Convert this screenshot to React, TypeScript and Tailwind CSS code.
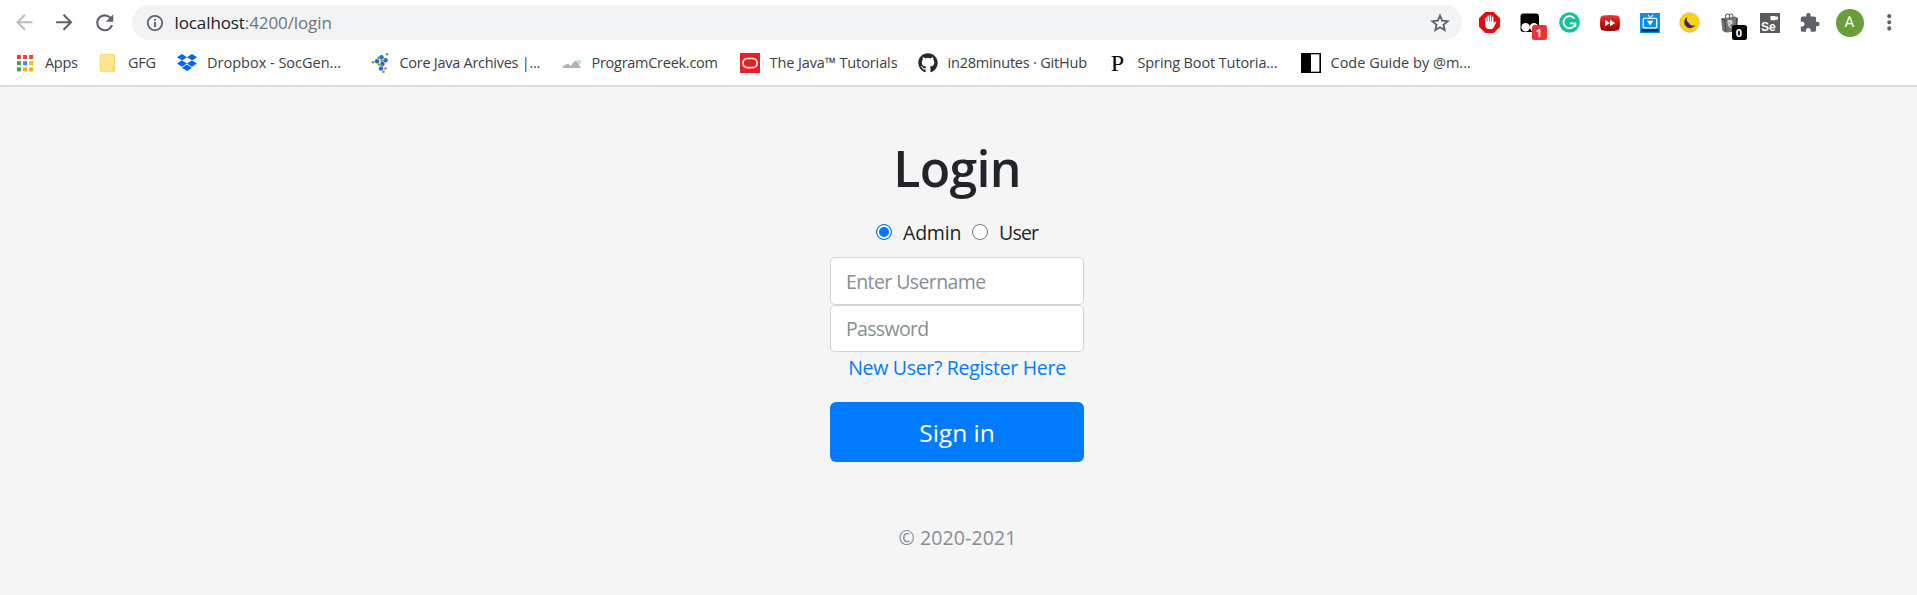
import React from 'react';
import { MdArrowBack, MdArrowForward, MdExtension, MdMoreVert, MdRefresh } from 'react-icons/md';
import { FaDropbox, FaGithub } from 'react-icons/fa';

function InfoIcon() {
  return (
    <svg width="20" height="20" viewBox="0 0 20 20">
      <circle cx="10" cy="10" r="7.200" fill="none" stroke="currentColor" strokeWidth="1.800" />
      <path d="M10 9v5M10 5.900v1.900" stroke="currentColor" strokeWidth="1.900" />
    </svg>
  );
}

function StarIcon() {
  return (
    <svg width="22" height="22" viewBox="0 0 24 24">
      <path
        d="M12 3.900l2.350 5.550 6 .52-4.550 3.950 1.360 5.880L12 16.680 6.840 19.800l1.360-5.880L3.650 9.970l6-.52z"
        fill="none"
        stroke="currentColor"
        strokeWidth="2"
      />
    </svg>
  );
}

function AppsIcon() {
  const colors = ['#ea4335', '#ea4335', '#ea4335', '#34a853', '#4285f4', '#fbbc04', '#34a853', '#fbab04', '#fbab04'];
  return (
    <svg width="20" height="20" viewBox="0 0 20 20">
      {colors.map((c, i) => (
        <rect key={i} x={2 + (i % 3) * 6.1} y={2 + Math.floor(i / 3) * 6.2} width="4" height="4" fill={c} />
      ))}
    </svg>
  );
}

function FolderIcon() {
  return (
    <svg width="20" height="20" viewBox="0 0 20 20">
      <path d="M3.5 1.3h12a1 1 0 0 1 1 1v15.4a1 1 0 0 1-1 1h-12a1.3 1.3 0 0 1-1.3-1.3V2.6a1.300 1.300 0 0 1 1.300-1.300z" fill="#ffe493" stroke="#f6d25f" strokeWidth=".7" />
      <path d="M14.200 18.900v-4.700a1.300 1.300 0 0 1 3 0v3.700a1 1 0 0 1-1 1z" fill="#fbd865" />
    </svg>
  );
}

function MoleculeIcon() {
  const blue = [[11.500, 4.300], [7, 8.300], [15.500, 7.300], [12.500, 11], [11, 15.500]];
  const green = [[17, 1.300], [3, 9.300], [8.500, 4.800], [9, 11.500], [15.500, 15.500], [13.500, 18.800], [11.500, 7.800]];
  return (
    <svg width="20" height="20" viewBox="0 0 20 20">
      {green.map(([x, y], i) => <circle key={i} cx={x} cy={y} r="1.300" fill="#6fa53c" />)}
      {blue.map(([x, y], i) => <circle key={i} cx={x} cy={y} r="2.200" fill="#2466c0" />)}
      <path d="M1 9.300h5M11.500 4.300l4 3M12.500 11L11 15.500" stroke="#7fa9c9" strokeWidth=".6" />
    </svg>
  );
}

function HillsIcon() {
  return (
    <svg width="20" height="20" viewBox="0 0 20 20">
      <path d="M.800 15v-1.800q1-1.200 2.200-1l1.500-1.200 2.300 0 2 1.800 3.500-4.300 2-.8 1.700 1.800 2.700 5.500z" fill="#b3b3b3" />
      <path d="M16 7.600l2.500 1M17.500 9.500l.7 1.300" stroke="#35b1e0" strokeWidth="1" />
    </svg>
  );
}

function OracleIcon() {
  return (
    <svg width="20" height="20" viewBox="0 0 20 20">
      <rect width="20" height="20" fill="#ee1c24" />
      <rect x="3" y="5.500" width="14" height="9.200" rx="4.200" fill="none" stroke="#fff" strokeWidth="1.700" />
    </svg>
  );
}

function HalfBoxIcon() {
  return (
    <svg width="20" height="20" viewBox="0 0 20 20">
      <rect width="20" height="20" fill="#000" />
      <rect x="10" y="1.300" width="8.400" height="17.400" fill="#fff" />
    </svg>
  );
}

function HandIcon() {
  return (
    <svg width="21" height="21" viewBox="0 0 20 20">
      <path d="M6 0h8l6 6v8l-6 6H6l-6-6V6z" fill="#e40d0d" />
      <path d="M6.700 10.500V6M8.800 10V4M10.900 10V3.600M13 10V5" stroke="#fff" strokeWidth="1.500" strokeLinecap="round" />
      <path d="M5.950 9h7.800v2l1-1.500c.8-1 2-.4 1.600.6l-2.300 4.400c-.8 1.400-1.800 1.900-3.900 1.900-2.900 0-4.200-1.500-4.200-4.200z" fill="#fff" />
    </svg>
  );
}

function MaskIcon() {
  return (
    <svg width="20" height="20" viewBox="0 0 20 20">
      <rect x=".5" y=".5" width="18.500" height="18.500" rx="3" fill="#000" />
      <circle cx="5.600" cy="14.300" r="4.200" fill="#fff" />
      <circle cx="14" cy="14.300" r="4.200" fill="#fff" />
    </svg>
  );
}

function GIcon() {
  return (
    <svg width="21" height="21" viewBox="0 0 21 21">
      <circle cx="10.500" cy="10.500" r="10.300" fill="#15c39a" />
      <path d="M15 6.200a6 6 0 1 0 1.200 5.800" fill="none" stroke="#fff" strokeWidth="1.700" strokeLinecap="round" />
      <path d="M11 11.300h5.400v3.600" fill="none" stroke="#fff" strokeWidth="1.700" />
    </svg>
  );
}

function ForwardIcon() {
  return (
    <svg width="20" height="20" viewBox="0 0 20 20">
      <defs>
        <linearGradient id="red" x1="0" y1="0" x2="0" y2="1">
          <stop offset="0" stopColor="#e83a3a" />
          <stop offset=".5" stopColor="#cf1010" />
          <stop offset="1" stopColor="#8d0505" />
        </linearGradient>
      </defs>
      <path d="M3 2.600q7-1.200 14 0 2.500.3 2.700 2.900.6 4.500 0 9-.2 2.600-2.700 2.900-7 1.200-14 0Q.5 17.100.3 14.500q-.6-4.500 0-9Q.5 2.900 3 2.600z" fill="url(#red)" />
      <path d="M5 6.800l5 3.200-5 3.200zM10 6.800l5.200 3.200-5.200 3.200z" fill="#fff" />
    </svg>
  );
}

function TvIcon() {
  return (
    <svg width="20" height="20" viewBox="0 0 20 20">
      <rect width="20" height="20" fill="#0c8cf5" />
      <rect x="1.500" y="16.300" width="17" height="2.300" fill="#0a2b52" />
      <rect x="3.300" y="5.300" width="13.400" height="9.500" rx="1" fill="none" stroke="#fff" strokeWidth="1.300" />
      <path d="M10.300 5L8 1.800M10.300 5l2.600-3.200" stroke="#fff" strokeWidth="1.100" />
      <path d="M7 7.800h6.200L10.100 12.400z" fill="#fff" />
    </svg>
  );
}

function MoonIcon() {
  return (
    <svg width="21" height="21" viewBox="0 0 21 21">
      <circle cx="10.500" cy="10.500" r="9.800" fill="#fad20c" stroke="#b9aa6c" strokeWidth=".8" strokeDasharray="1.500 1" />
      <path d="M8.600 4.700a6 6 0 1 0 7.900 8.200 4.700 4.700 0 0 1-6.600-1.900 4.700 4.700 0 0 1-1.300-6.300z" fill="#41217f" />
    </svg>
  );
}

function BagIcon() {
  return (
    <svg width="20" height="20" viewBox="0 0 20 20">
      <path d="M1 5.500l14-2 3 1.500-1 13.500-11 1-3.500-1.500z" fill="#757575" />
      <path d="M2 6l2.500 1L6 18.500M16.800 5.500L16 18" stroke="#444" strokeWidth="1.200" fill="none" />
      <path d="M5.500 6.500V3q0-2 2-2t2 2v3M9.500 4V2.700q0-1.700 1.700-1.700t1.700 1.700V5" stroke="#606060" strokeWidth="1.100" fill="none" />
      <path d="M7.500 8h5M7.500 10h5M8.300 8q3.700.2 3 2.500-.6 1.500-3 1.400l3 3.100" stroke="#fff" strokeWidth="1" fill="none" />
    </svg>
  );
}

function SeleniumIcon() {
  return (
    <div className="flex h-5 w-5 flex-col bg-[#5b5b5b]">
      <svg width="20" height="8" viewBox="0 0 20 8">
        <path d="M10.500 3h5v1.200l2.300-1.200v4.200l-2.300-1v1h-5z" fill="#fff" />
      </svg>
      <span className="pl-[1.5px] text-[12px] font-bold leading-[12px] text-white font-['Liberation_Sans',sans-serif]">Se</span>
    </div>
  );
}

const bookmarks = [
  { label: 'Apps', icon: <AppsIcon />, cls: 'w-[53px] tracking-[-0.3px]' },
  { label: 'GFG', icon: <FolderIcon />, cls: 'w-[49px] tracking-[-0.3px]' },
  { label: 'Dropbox - SocGen...', icon: <FaDropbox size={21} color="#0061ff" />, cls: 'w-[162.5px]' },
  { label: 'Core Java Archives |...', icon: <MoleculeIcon />, cls: 'w-[162px] tracking-[-0.27px]' },
  { label: 'ProgramCreek.com', icon: <HillsIcon />, cls: 'w-[148px] tracking-[-0.27px]' },
  { label: 'The Java™ Tutorials', icon: <OracleIcon />, cls: 'w-[148px] tracking-[-0.1px]' },
  { label: 'in28minutes · GitHub', icon: <FaGithub size={20} color="#24292e" />, cls: 'w-[160px] tracking-[-0.2px]' },
  {
    label: 'Spring Boot Tutoria...',
    icon: <span className="text-[24px] leading-5 text-black font-['Liberation_Serif',serif]">P</span>,
    cls: 'w-[163px] tracking-[-0.12px]',
  },
  { label: 'Code Guide by @m...', icon: <HalfBoxIcon />, cls: 'w-[150px]' },
];

function Slot({ children }: { children: React.ReactNode }) {
  return <div className="relative flex h-[35px] w-10 shrink-0 items-center justify-center">{children}</div>;
}

function Badge({ className, children }: { className: string; children: React.ReactNode }) {
  return (
    <span className={`absolute left-[22px] top-5 flex h-[15px] w-[15px] items-center justify-center rounded-[2.5px] text-[11px] font-bold leading-none text-white ${className}`}>
      {children}
    </span>
  );
}

function BrowserBar() {
  return (
    <header className="flex h-[87px] flex-col border-b-2 border-[#dadce0] bg-white pt-[5px]">
      <div className="flex h-[35px] items-center pl-[4.5px] pr-[7.5px] text-[#5f6368]">
        <Slot><MdArrowBack size={24.5} color="#bbbdbf" /></Slot>
        <Slot><MdArrowForward size={24.5} /></Slot>
        <Slot><MdRefresh size={25.5} /></Slot>
        <div className="ml-[7.5px] flex h-[35px] grow items-center rounded-full bg-[#f1f3f4] pl-[12.5px] pr-[11.5px]">
          <InfoIcon />
          <span className="ml-[10px] grow text-[17px] leading-[35px] tracking-[-0.1px] text-[#70757a]">
            <span className="text-[#202124]">localhost</span>:4200/login
          </span>
          <StarIcon />
        </div>
        <div className="ml-[7.5px] flex">
          <Slot><HandIcon /></Slot>
          <Slot><MaskIcon /><Badge className="bg-[#ee3131]">1</Badge></Slot>
          <Slot><GIcon /></Slot>
          <Slot><ForwardIcon /></Slot>
          <Slot><TvIcon /></Slot>
          <Slot><MoonIcon /></Slot>
          <Slot><BagIcon /><Badge className="bg-black">0</Badge></Slot>
          <Slot><SeleniumIcon /></Slot>
          <Slot><MdExtension size={21.5} /></Slot>
          <Slot>
            <span className="flex h-7 w-7 items-center justify-center rounded-full bg-[#689f38] text-[15px] leading-none text-white font-['Roboto',sans-serif]">A</span>
          </Slot>
          <Slot><MdMoreVert size={24.5} /></Slot>
        </div>
      </div>
      <nav className="flex h-[45px] items-center pl-[15px] text-[14.5px] text-[#3c4043]">
        {bookmarks.map((b) => (
          <a key={b.label} className="flex shrink-0 items-center">
            <span className="mr-[10px] flex h-5 w-5 items-center justify-center">{b.icon}</span>
            <span className={`whitespace-nowrap leading-5 ${b.cls}`}>{b.label}</span>
          </a>
        ))}
      </nav>
    </header>
  );
}

const radioCls =
  'h-4 w-4 shrink-0 appearance-none rounded-full border border-[#767676] bg-white checked:border-[#0075ff] checked:bg-[#0075ff] checked:shadow-[inset_0_0_0_2px_#fff]';
const inputCls =
  'block w-full rounded-[5px] border border-[#ced4da] bg-white px-[15px] text-[19.5px] text-[#495057] placeholder:text-[#868e96] placeholder:opacity-100 outline-none';

export default function App() {
  return (
    <div className="flex h-[595px] flex-col overflow-hidden bg-[#f5f5f5] font-['Open_Sans','Noto_Sans',sans-serif]">
      <BrowserBar />
      <main className="flex grow justify-center pr-[3px] pt-[50px]">
        <form className="flex w-[254px] flex-col text-[19.5px] text-[#212529]">
          <h1 className="h-20 text-center text-[50px] font-semibold leading-[63px] tracking-[-0.7px]">Login</h1>
          <div className="flex h-10 pl-[46px]">
            <label className="flex h-[30px] w-24 items-center">
              <input type="radio" name="role" defaultChecked className={radioCls} />
              <span className="ml-[11px] pt-[2px] leading-[28px] tracking-[-0.2px]">Admin</span>
            </label>
            <label className="flex h-[30px] items-center">
              <input type="radio" name="role" className={radioCls} />
              <span className="ml-[11px] pt-[2px] leading-[28px] tracking-[-0.8px]">User</span>
            </label>
          </div>
          <input placeholder="Enter Username" className={`h-12 tracking-[-0.6px] ${inputCls}`} />
          <input type="password" placeholder="Password" className={`h-[47px] tracking-[-0.67px] ${inputCls}`} />
          <a className="h-[50px] whitespace-nowrap text-center leading-[32px] tracking-[-0.31px] text-[#007bff]">New User? Register Here</a>
          <button type="button" className="h-[60px] rounded-[6px] bg-[#007bff] pt-[2px] text-[24.5px] text-white">Sign in</button>
          <p className="mt-[61px] pl-[1px] text-center leading-[30px] tracking-[0.1px] text-[#868e96]">© 2020-2021</p>
        </form>
      </main>
    </div>
  );
}
